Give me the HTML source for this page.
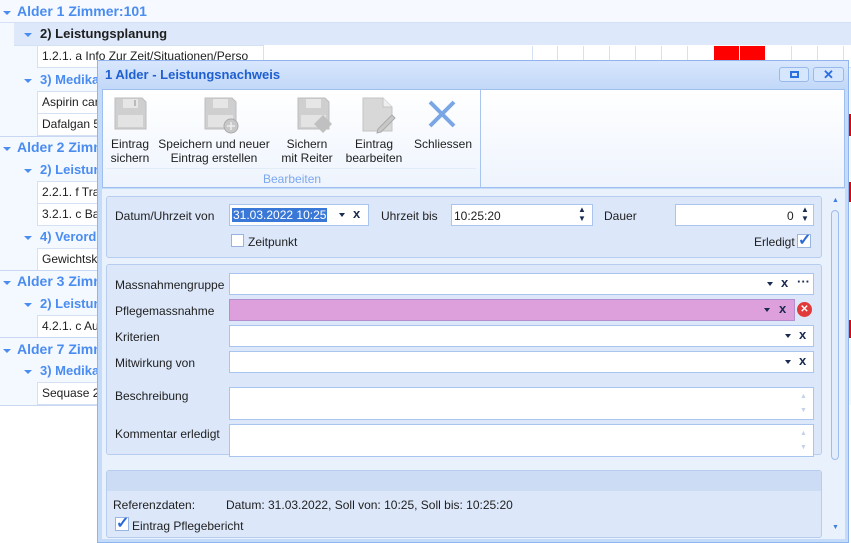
<!DOCTYPE html>
<html><head><meta charset="utf-8"><style>
*{box-sizing:border-box;margin:0;padding:0}
body{width:851px;height:543px;overflow:hidden;background:#fff;font-family:"Liberation Sans",sans-serif;font-size:12px;color:#1e1e1e;position:relative}
.a{position:absolute}
.row{position:absolute;left:0;width:851px;border-bottom:1px solid #d4e0f4}
.g1{color:#4a8cf0;font-weight:bold;font-size:14px}
.g2{color:#4a8cf0;font-weight:bold;font-size:13px}
.tri{position:absolute;width:0;height:0;border-left:4px solid transparent;border-right:4px solid transparent;border-top:4px solid #4a8cf0}
.cell{position:absolute;background:#fff;border:1px solid #d4e0f4;padding-left:4px;line-height:20px;font-size:12px;overflow:hidden;white-space:nowrap}
.inp{position:absolute;background:#fff;border:1px solid #a9c4ee;height:22px}
.lbl{position:absolute;font-size:12px;color:#1e1e1e}
.x{position:absolute;font-weight:bold;font-size:13px;color:#1a2a50}
.dd{position:absolute;width:0;height:0;border-left:3px solid transparent;border-right:3px solid transparent;border-top:4px solid #1a2a50}
.grp{position:absolute;background:#dce8fa;border:1px solid #b7cdf0;border-radius:3px}
</style></head><body>
<!-- background list -->
<div class="a" style="left:0;top:0;width:851px;height:405px;background:#f4f8ff"></div>
<div class="row" style="top:0;height:23px;background:#f6f9ff"></div>
<div class="tri" style="left:3px;top:11px"></div>
<div class="a g1" style="left:17px;top:3px">Alder 1 Zimmer:101</div>
<div class="row" style="left:14px;top:23px;height:23px;background:#dde9fb"></div>
<div class="tri" style="left:24px;top:33px"></div>
<div class="a" style="left:40px;top:26px;font-weight:bold;font-size:13px">2) Leistungsplanung</div>
<div class="cell" style="left:37px;top:45px;width:227px;height:23px">1.2.1. a Info Zur Zeit/Situationen/Perso</div>
<div class="a" style="left:264px;top:45px;width:587px;height:23px;background:#fff;border-bottom:1px solid #d4e0f4"></div>
<div class="a" style="left:532px;top:46px;width:1px;height:20px;background:#d4e0f4"></div>
<div class="a" style="left:557px;top:46px;width:1px;height:20px;background:#d4e0f4"></div>
<div class="a" style="left:583px;top:46px;width:1px;height:20px;background:#d4e0f4"></div>
<div class="a" style="left:609px;top:46px;width:1px;height:20px;background:#d4e0f4"></div>
<div class="a" style="left:635px;top:46px;width:1px;height:20px;background:#d4e0f4"></div>
<div class="a" style="left:661px;top:46px;width:1px;height:20px;background:#d4e0f4"></div>
<div class="a" style="left:687px;top:46px;width:1px;height:20px;background:#d4e0f4"></div>
<div class="a" style="left:714px;top:46px;width:25px;height:16px;background:#f00"></div>
<div class="a" style="left:740px;top:46px;width:25px;height:16px;background:#f00"></div>
<div class="a" style="left:791px;top:46px;width:1px;height:20px;background:#d4e0f4"></div>
<div class="a" style="left:817px;top:46px;width:1px;height:20px;background:#d4e0f4"></div>
<div class="a" style="left:843px;top:46px;width:1px;height:20px;background:#d4e0f4"></div>

<div class="tri" style="left:24px;top:79px"></div><div class="a g2" style="left:40px;top:72px">3) Medika</div>
<div class="cell" style="left:37px;top:91px;width:70px;height:23px">Aspirin card</div>
<div class="cell" style="left:37px;top:113px;width:70px;height:23px">Dafalgan 5</div>
<div class="a" style="left:0;top:136px;width:100px;border-top:1px solid #c8d8f2"></div>
<div class="tri" style="left:3px;top:147px"></div><div class="a g1" style="left:17px;top:139px">Alder 2 Zimm</div>
<div class="tri" style="left:24px;top:169px"></div><div class="a g2" style="left:40px;top:162px">2) Leistun</div>
<div class="cell" style="left:37px;top:181px;width:70px;height:23px">2.2.1. f Tra</div>
<div class="cell" style="left:37px;top:203px;width:70px;height:23px">3.2.1. c Ba</div>
<div class="tri" style="left:24px;top:236px"></div><div class="a g2" style="left:40px;top:229px">4) Verord</div>
<div class="cell" style="left:37px;top:248px;width:70px;height:23px">Gewichtsko</div>
<div class="a" style="left:0;top:270px;width:100px;border-top:1px solid #c8d8f2"></div>
<div class="tri" style="left:3px;top:281px"></div><div class="a g1" style="left:17px;top:273px">Alder 3 Zimm</div>
<div class="tri" style="left:24px;top:303px"></div><div class="a g2" style="left:40px;top:296px">2) Leistun</div>
<div class="cell" style="left:37px;top:315px;width:70px;height:23px">4.2.1. c Au</div>
<div class="a" style="left:0;top:337px;width:100px;border-top:1px solid #c8d8f2"></div>
<div class="tri" style="left:3px;top:349px"></div><div class="a g1" style="left:17px;top:341px">Alder 7 Zimm</div>
<div class="tri" style="left:24px;top:370px"></div><div class="a g2" style="left:40px;top:363px">3) Medika</div>
<div class="cell" style="left:37px;top:382px;width:70px;height:23px">Sequase 2</div>
<div class="a" style="left:0;top:405px;width:100px;border-top:1px solid #c8d8f2"></div>
<div class="a" style="left:849px;top:114px;width:2px;height:22px;background:#e00"></div>
<div class="a" style="left:849px;top:182px;width:2px;height:20px;background:#e00"></div>
<div class="a" style="left:849px;top:320px;width:2px;height:18px;background:#e00"></div>

<!-- dialog -->
<div class="a" style="left:97px;top:60px;width:752px;height:483px;background:#c5dbfa;border:1px solid #8fb4ee"></div>
<div class="a" style="left:98px;top:61px;width:750px;height:28px;background:linear-gradient(#d8e7fd,#c2d8f8)"></div>
<div class="a" style="left:105px;top:67px;font-weight:bold;font-size:13px;color:#1f5fd0">1 Alder - Leistungsnachweis</div>
<div class="a" style="left:779px;top:67px;width:30px;height:15px;border:1px solid #98b9ec;border-radius:3px;background:#d6e6fd"><div class="a" style="left:10px;top:3px;width:9px;height:7px;border:2px solid #2a70e0"></div></div>
<div class="a" style="left:813px;top:67px;width:31px;height:15px;border:1px solid #98b9ec;border-radius:3px;background:#d6e6fd;color:#2a70e0;font-weight:bold;text-align:center;line-height:13px;font-size:13px">✕</div>

<!-- toolbar -->
<div class="a" style="left:102px;top:89px;width:743px;height:99px;background:linear-gradient(#fff,#eef4fd);border:1px solid #9fc0ee"></div>
<div class="a" style="left:480px;top:90px;width:1px;height:97px;background:#a9c5ee"></div>
<div class="a" style="left:106px;top:168px;width:370px;height:1px;background:#e3ecf9"></div>
<div class="a" style="left:263px;top:172px;color:#7aa7ee;font-size:12px">Bearbeiten</div>
<svg class="a" style="left:110px;top:96px" width="360" height="40">
<g fill="#cfcfcf" stroke="#bdbdbd"><path d="M5 2h27l4 4v27H5z"/></g><rect x="13" y="3" width="15" height="9" fill="#e6e6e6"/><rect x="24" y="4" width="2" height="6" fill="#bbb"/><rect x="8" y="19" width="25" height="12" fill="#e3e3e3"/>
<g transform="translate(90,0)"><path d="M5 2h27l4 4v27H5z" fill="#cfcfcf" stroke="#bdbdbd"/><rect x="13" y="3" width="15" height="9" fill="#e6e6e6"/><rect x="8" y="19" width="25" height="12" fill="#e3e3e3"/><circle cx="31" cy="30" r="7" fill="#c8c8c8" stroke="#aaa"/><path d="M31 26v8M27 30h8" stroke="#eee" stroke-width="1.5"/></g>
<g transform="translate(183,0)"><path d="M5 2h27l4 4v27H5z" fill="#cfcfcf" stroke="#bdbdbd"/><rect x="13" y="3" width="15" height="9" fill="#e6e6e6"/><rect x="8" y="19" width="25" height="12" fill="#e3e3e3"/><path d="M30 19l9 9-9 9-9-9z" fill="#c0c0c0"/></g>
<g transform="translate(250,0)"><path d="M3 2h20l9 9v24H3z" fill="#d8d8d8" stroke="#c4c4c4"/><path d="M23 2v9h9" fill="#eee" stroke="#c4c4c4"/><path d="M18 33l14-14 3 3-14 14-4 1z" fill="#c8c8c8" stroke="#aaa"/></g>
<g transform="translate(318,4)" stroke="#7ba6e6" stroke-width="4"><path d="M2 2l24 24M26 2L2 26"/></g>
</svg>
<div class="a" style="left:110px;top:137px;width:40px;text-align:center;line-height:14px">Eintrag sichern</div>
<div class="a" style="left:158px;top:137px;width:112px;text-align:center;line-height:14px">Speichern und neuer Eintrag erstellen</div>
<div class="a" style="left:280px;top:137px;width:54px;text-align:center;line-height:14px">Sichern mit Reiter</div>
<div class="a" style="left:342px;top:137px;width:64px;text-align:center;line-height:14px">Eintrag bearbeiten</div>
<div class="a" style="left:414px;top:137px;width:58px;text-align:center;line-height:14px">Schliessen</div>

<!-- form area -->
<div class="a" style="left:102px;top:189px;width:743px;height:350px;background:#e9f1fc"></div>
<div class="grp" style="left:106px;top:196px;width:716px;height:62px"></div>
<div class="lbl" style="left:115px;top:209px">Datum/Uhrzeit von</div>
<div class="inp" style="left:229px;top:204px;width:140px"></div>
<div class="a" style="left:232px;top:208px;background:#3a78d8;color:#fff;padding:0 1px;line-height:14px">31.03.2022 10:25</div>
<div class="dd" style="left:339px;top:213px"></div><div class="x" style="left:353px;top:206px">x</div>
<div class="lbl" style="left:381px;top:209px">Uhrzeit bis</div>
<div class="inp" style="left:451px;top:204px;width:142px"></div>
<div class="a" style="left:454px;top:209px">10:25:20</div>
<div class="a" style="left:578px;top:205px;font-size:8px;line-height:9px;color:#1a2a50">▲<br>▼</div>
<div class="lbl" style="left:604px;top:209px">Dauer</div>
<div class="inp" style="left:675px;top:204px;width:139px"></div>
<div class="a" style="left:787px;top:209px">0</div>
<div class="a" style="left:801px;top:205px;font-size:8px;line-height:9px;color:#1a2a50">▲<br>▼</div>
<div class="a" style="left:231px;top:234px;width:13px;height:13px;border:1px solid #98b4e0;background:#fff"></div>
<div class="lbl" style="left:248px;top:235px">Zeitpunkt</div>
<div class="lbl" style="left:754px;top:235px">Erledigt</div>
<div class="a" style="left:797px;top:234px;width:14px;height:14px;border:1px solid #98b4e0;background:#fff;color:#2a6ad8;font-size:16px;line-height:12px;font-weight:bold">✓</div>

<div class="grp" style="left:106px;top:264px;width:716px;height:191px"></div>
<div class="lbl" style="left:115px;top:278px">Massnahmengruppe</div>
<div class="inp" style="left:229px;top:273px;width:585px"></div>
<div class="dd" style="left:767px;top:282px"></div><div class="x" style="left:781px;top:275px">x</div><div class="x" style="left:797px;top:274px">···</div>
<div class="lbl" style="left:115px;top:304px">Pflegemassnahme</div>
<div class="inp" style="left:229px;top:299px;width:566px;background:#dda0dd;border-color:#b58ed0"></div>
<div class="dd" style="left:764px;top:308px"></div><div class="x" style="left:779px;top:301px">x</div>
<div class="a" style="left:797px;top:302px;width:15px;height:15px;border-radius:50%;background:#e23a3a;color:#fff;font-size:10px;text-align:center;line-height:15px;font-weight:bold">✕</div>
<div class="lbl" style="left:115px;top:330px">Kriterien</div>
<div class="inp" style="left:229px;top:325px;width:585px"></div>
<div class="dd" style="left:785px;top:334px"></div><div class="x" style="left:799px;top:327px">x</div>
<div class="lbl" style="left:115px;top:356px">Mitwirkung von</div>
<div class="inp" style="left:229px;top:351px;width:585px"></div>
<div class="dd" style="left:785px;top:360px"></div><div class="x" style="left:799px;top:353px">x</div>
<div class="lbl" style="left:115px;top:389px">Beschreibung</div>
<div class="inp" style="left:229px;top:387px;width:585px;height:33px"></div>
<div class="a" style="left:800px;top:390px;font-size:7px;line-height:14px;color:#c5d3e8">▲<br>▼</div>
<div class="lbl" style="left:115px;top:427px">Kommentar erledigt</div>
<div class="inp" style="left:229px;top:424px;width:585px;height:33px"></div>
<div class="a" style="left:800px;top:427px;font-size:7px;line-height:14px;color:#c5d3e8">▲<br>▼</div>

<div class="grp" style="left:106px;top:470px;width:716px;height:68px"></div>
<div class="a" style="left:107px;top:471px;width:714px;height:20px;background:#ccdcf5"></div>
<div class="lbl" style="left:113px;top:498px">Referenzdaten:</div>
<div class="lbl" style="left:226px;top:498px">Datum: 31.03.2022, Soll von: 10:25, Soll bis: 10:25:20</div>
<div class="a" style="left:115px;top:517px;width:14px;height:14px;border:1px solid #98b4e0;background:#fff;color:#2a6ad8;font-size:16px;line-height:12px;font-weight:bold">✓</div>
<div class="lbl" style="left:132px;top:519px">Eintrag Pflegebericht</div>

<!-- scrollbar -->
<div class="a" style="left:828px;top:196px;width:15px;height:340px;background:#e9f1fc"></div>
<div class="a" style="left:832px;top:197px;font-size:7px;color:#3f7fe0">▲</div>
<div class="a" style="left:831px;top:210px;width:8px;height:250px;border:1px solid #9dbdea;border-radius:4px;background:#e3edfb"></div>
<div class="a" style="left:832px;top:524px;font-size:7px;color:#3f7fe0">▼</div>
</body></html>
